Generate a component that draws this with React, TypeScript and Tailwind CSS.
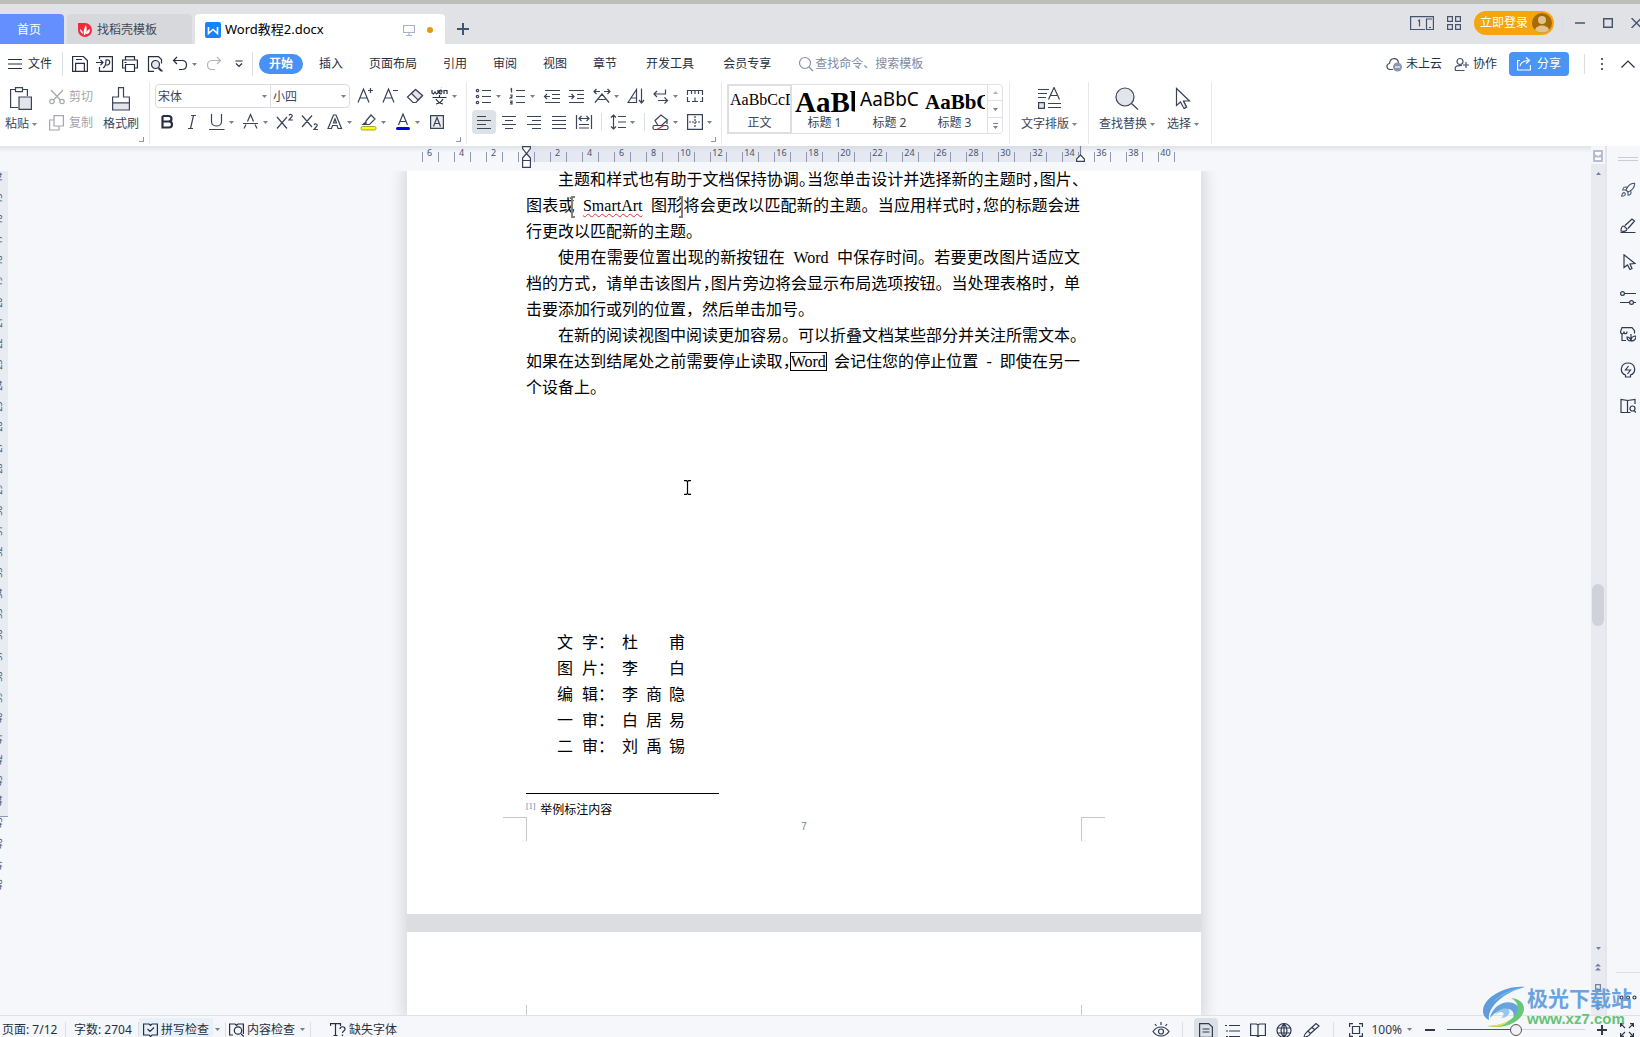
import { ReactNode, useState } from 'react';
import { Rocket } from 'lucide-react';

const menuTabs = ['插入', '页面布局', '引用', '审阅', '视图', '章节'];

const rulerLabels = [
  '6', '4', '2', '', '2', '4', '6', '8', '10', '12', '14', '16', '18', '20', '22', '24',
  '26', '28', '30', '32', '34', '36', '38', '40',
];

const credits = [
  ['文', '字：', '杜', '', '甫'],
  ['图', '片：', '李', '', '白'],
  ['编', '辑：', '李', '商', '隐'],
  ['一', '审：', '白', '居', '易'],
  ['二', '审：', '刘', '禹', '锡'],
];

const range = (from: number, to: number) => Array.from({ length: to - from + 1 }, (_, i) => from + i);

type IconProps = { w?: number; h?: number; className?: string; children: ReactNode };

function Icon({ w = 18, h = 18, className = '', children }: IconProps) {
  return (
    <svg
      width={w}
      height={h}
      viewBox={`0 0 ${w} ${h}`}
      fill="none"
      stroke="currentColor"
      strokeWidth={1.2}
      className={`shrink-0 ${className}`}
      aria-hidden="true"
    >
      {children}
    </svg>
  );
}

function Caret({ className = '' }: { className?: string }) {
  return (
    <svg width="5" height="3" viewBox="0 0 5 3" className={`shrink-0 ${className}`} aria-hidden="true">
      <path d="M0 0h5L2.5 3z" fill="#74809c" />
    </svg>
  );
}

type ToolProps = { label: string; caret?: boolean; active?: boolean; children: ReactNode };

function Tool({ label, caret, active, children }: ToolProps) {
  return (
    <button type="button" title={label} aria-label={label} className="flex h-6 shrink-0 items-center">
      <span className={`flex h-6 w-6 items-center justify-center rounded-sm ${active ? 'bg-[#dde2e7]' : ''}`}>
        {children}
      </span>
      {caret && (
        <span className="flex w-[9px] justify-start">
          <Caret />
        </span>
      )}
    </button>
  );
}

function GroupCorner() {
  return <span className="absolute right-[5px] bottom-0.5 h-[5px] w-[5px] border-r border-b border-[#8b95ab]" />;
}

function Divider({ className = '' }: { className?: string }) {
  return <span className={`w-px shrink-0 bg-[#dcdee4] ${className}`} />;
}

function TitleBar() {
  return (
    <header className="flex h-11 shrink-0 items-stretch overflow-hidden border-t-4 border-[#bdbdba] bg-[#e1e2e6]">
      <nav className="flex items-end gap-[3px]">
        <button type="button" className="h-[30px] w-16 rounded-tr-sm bg-[#648fff] pt-0.5 pr-1.5 text-white">
          首页
        </button>
        <button type="button" className="flex h-[30px] w-[125px] items-center gap-1 rounded-t-sm bg-[#d7d8db] pt-0.5 pl-[10px] text-[#3f4757]">
          <Icon w={16} h={16}>
            <path d="M1 1h7a7 7 0 1 1-7 7z" fill="#f8283c" stroke="none" />
            <path d="M7 13c-1-3 0-7 2-10 1 3 1 7-1 10zM9 12c0-2 1-4 4-5 0 3-1 5-4 5zM6 12c-2-1-3-3-3-5 2 1 3 3 3 5z" fill="#fff" stroke="none" />
          </Icon>
          找稻壳模板
        </button>
        <div className="flex h-[30px] w-[250px] items-center rounded-t-sm bg-white pt-0.5 pr-3 pl-[10px] text-black">
          <Icon w={16} h={16}>
            <rect width="16" height="16" rx="2" fill="#1683fb" stroke="none" />
            <path d="M3.500 5v6.500L8 7.500l4.500 4V5" stroke="#fff" strokeWidth="1.6" />
          </Icon>
          <span className="ml-1 text-[13px]">Word教程2.docx</span>
          <Icon w={12} h={12} className="ml-auto text-[#aab3c5]">
            <path d="M.5 1.500h11v7H.5zM6 8.500v3M3 11.500h6" />
          </Icon>
          <span className="ml-3 h-1.5 w-1.5 rounded-full bg-[#e8960c]" />
        </div>
      </nav>
      <button type="button" aria-label="新建标签" className="mt-[10px] ml-3 flex w-3 items-center text-[#46536f]">
        <Icon w={12} h={12}>
          <path d="M6 0v12M0 6h12" strokeWidth="2" />
        </Icon>
      </button>

      <div className="mb-0.5 ml-auto flex shrink-0 items-center text-[#46536f]">
        <button type="button" aria-label="窗口布局">
          <Icon w={24} h={14}>
            <path d="M15 13.500H.6V.6h22.800v12.900H16.500V3H22M9.500 10.500V4L8 5M19 11.500h2" />
          </Icon>
        </button>
        <button type="button" aria-label="应用" className="ml-[13px]">
          <Icon w={14} h={14}>
            <path d="M.6.600h4.800v4.800H.6zM8.600.600h4.800v4.800H8.600zM.6 8.600h4.800v4.800H.6zM8.600 8.600h4.800v4.800H8.600z" />
          </Icon>
        </button>
        <button type="button" className="ml-[13px] flex h-6 w-20 items-center gap-1 rounded-full bg-[#f5a60d] pl-1.5 text-white">
          <span className="whitespace-nowrap">立即登录</span>
          <Icon w={20} h={20}>
            <circle cx="10" cy="10" r="10" fill="#a36a05" stroke="none" />
            <circle cx="10" cy="7" r="4" fill="#e0c48f" stroke="none" />
            <path d="M3 17c1-6 13-6 14 0a10 10 0 0 1-14 0z" fill="#e0c48f" stroke="none" />
          </Icon>
        </button>
        <Divider className="ml-2 h-5 bg-[#c3c6ce]" />
        <button type="button" aria-label="最小化" className="ml-3">
          <Icon w={10} h={12}>
            <path d="M0 6h10" strokeWidth="1.500" />
          </Icon>
        </button>
        <button type="button" aria-label="最大化" className="ml-[18px]">
          <Icon w={10} h={10}>
            <path d="M.7.700h8.600v8.600H.7z" strokeWidth="1.400" />
          </Icon>
        </button>
        <button type="button" aria-label="关闭" className="-mr-0.5 ml-[18px]">
          <Icon w={11} h={10}>
            <path d="m.5 0 10 10M10.500 0l-10 10" strokeWidth="1.400" />
          </Icon>
        </button>
      </div>
    </header>
  );
}

function MenuBar() {
  return (
    <div className="flex h-[38px] shrink-0 items-center overflow-hidden bg-white pt-0.5 whitespace-nowrap text-[#262f42]">
      <button type="button" className="ml-2 flex items-center gap-1.5">
        <Icon w={14} h={12}>
          <path d="M0 1.500h14M0 6h14M0 10.500h14" />
        </Icon>
        文件
      </button>
      <Divider className="ml-[10px] h-6" />
      <div className="ml-[5px] flex items-center gap-px">
        <Tool label="保存">
          <Icon>
            <path d="M1.600 4.500v-3h10.800l4 4v10.900H4.500M1.600 4.500v11.900h3v-8h8.800v8M5 4.500h6" />
          </Icon>
        </Tool>
        <Tool label="输出为PDF">
          <Icon>
            <path d="M3.500 4V1.600h12.900v14.800H3.500V12M0 7.500h7M4.500 5 7 7.500 4.500 10M7 13c2-1 3-4 3-8 5-1 5 5 0 5" />
          </Icon>
        </Tool>
        <Tool label="打印">
          <Icon>
            <path d="M4.500 5V1.600h9V5M4.500 13H1.600V5h14.800v8h-2.900M4.500 9.500h9v7h-9zM3.500 7.500h2" />
          </Icon>
        </Tool>
        <Tool label="打印预览">
          <Icon>
            <path d="M8 16.400H2.500V1.600h10l3 3v4M15 16l-2.500-2.500" />
            <circle cx="9.500" cy="9.500" r="4" fill="#e3e5ea" />
            <path d="m12.500 12.500 4 4" />
          </Icon>
        </Tool>
        <Tool label="撤销" caret>
          <Icon>
            <path d="M6 2 2.500 5.500 6 9M2.500 5.500H11c6 0 6 9 0 9H8" />
          </Icon>
        </Tool>
        <Tool label="恢复">
          <Icon className="text-[#b1b4bb]">
            <path d="m12 2 3.500 3.500L12 9M15.500 5.500H7c-6 0-6 9 0 9h3" />
          </Icon>
        </Tool>
        <Tool label="自定义快速访问工具栏">
          <Icon w={8} h={8}>
            <path d="M.5 1h7M1 3.500 4 6.500l3-3" />
          </Icon>
        </Tool>
      </div>
      <Divider className="ml-px h-6" />
      <button type="button" className="mr-[3px] ml-1.5 h-5 w-11 rounded-full bg-[#4a91f5] font-bold text-white">
        开始
      </button>
      {menuTabs.map(tab => (
        <button type="button" key={tab} className="px-[13px]">
          {tab}
        </button>
      ))}
      <button type="button" className="px-4">开发工具</button>
      <button type="button" className="px-[13px]">会员专享</button>
      <label className="ml-[14px] flex items-center gap-px text-[#8590a6]">
        <Icon w={16} h={16}>
          <circle cx="7" cy="7" r="5.500" />
          <path d="m11 11 4 4" />
        </Icon>
        <input type="text" aria-label="搜索" placeholder="查找命令、搜索模板" className="w-[130px] placeholder-[#7f8aa2] outline-none" />
      </label>

      <div className="ml-auto flex shrink-0 items-center">
        <button type="button" className="flex items-center gap-1">
          <Icon w={16} h={16} className="text-[#46536f]">
            <path d="M7 13.500H4C0 13 0 8 3.500 7.500 4 1 12 1 12.500 7" />
            <circle cx="11.500" cy="11" r="4.500" fill="#8d97ab" stroke="none" />
            <path d="M9 11h5" stroke="#fff" />
          </Icon>
          未上云
        </button>
        <button type="button" className="ml-3 flex items-center gap-1">
          <Icon w={15} h={15} className="text-[#46536f]">
            <circle cx="6" cy="4.500" r="3" />
            <path d="M10.500 13.500H1.500C0 8 4 9 8 8.500M12 5v6M9 8h6" />
          </Icon>
          协作
        </button>
        <button type="button" className="ml-3 flex h-6 w-[60px] items-center gap-1.5 rounded bg-[#4a93f7] pl-2 text-white">
          <Icon w={14} h={14}>
            <path d="M3 3.500H.6V13h12.800V8M3 9c1-4 4-5.500 9-5.500M9 .5l3.500 3L9 6.500" />
          </Icon>
          分享
        </button>
        <Divider className="ml-[15px] h-5" />
        <button type="button" aria-label="更多" className="ml-4">
          <svg width="2" height="12" viewBox="0 0 2 12" fill="#5a6478">
            <path d="M0 0h2v2H0zM0 5h2v2H0zM0 10h2v2H0z" />
          </svg>
        </button>
        <button type="button" aria-label="收起功能区" className="mr-[5px] ml-[18px]">
          <Icon w={14} h={8}>
            <path d="m.5 7.500 6.500-6.500 6.500 6.500" />
          </Icon>
        </button>
      </div>
    </div>
  );
}

function ClipboardGroup() {
  return (
    <div className="relative flex w-[150px] shrink-0 border-r border-[#e6e8ec]">
      <button type="button" className="flex w-[42px] flex-col items-center gap-1 pt-[5px]">
        <Icon w={22} h={24}>
          <path d="M8 20.500H.6V2.500H5M13 2.500h4.400V9M5.500.600h7v4h-7z" />
          <path d="M9 10h12.400v12.400H9z" fill="#e3e5ea" />
        </Icon>
        <span className="flex items-center gap-[3px] leading-[18px]">
          粘贴
          <Caret />
        </span>
      </button>
      <div className="ml-[7px] flex flex-col gap-0.5 pt-[3px] text-[#a3a6ad]">
        <button type="button" className="flex h-6 items-center gap-1">
          <Icon w={16} h={16}>
            <path d="m2 1 9.500 10M14 1 4.500 11" />
            <circle cx="3" cy="12.500" r="2.200" />
            <circle cx="13" cy="12.500" r="2.200" />
          </Icon>
          剪切
        </button>
        <button type="button" className="flex h-6 items-center gap-1">
          <Icon w={16} h={16}>
            <path d="M5 .6h9.400V11H5zM5 5H.6v10H10v-4" />
          </Icon>
          复制
        </button>
      </div>
      <button type="button" className="ml-[10px] flex w-9 flex-col items-center gap-1 pt-[5px]">
        <Icon w={18} h={24}>
          <path d="M6.500 10V.6h5V10h5.900v6H.6v-6z" />
          <path d="M.6 16h16.800v7H.6z" fill="#e3e5ea" />
        </Icon>
        <span className="leading-[18px]">格式刷</span>
      </button>
      <GroupCorner />
    </div>
  );
}

function FontGroup() {
  return (
    <div className="relative flex w-[317px] shrink-0 flex-col gap-0.5 border-r border-[#e6e8ec] pt-0.5 pl-[5px]">
      <div className="flex items-center gap-px">
        <div className="mr-0.5 flex h-6 w-[195px] items-center rounded-sm border border-[#d9dbe0]">
          <select aria-label="字体" className="w-[106px] appearance-none pt-0.5 pl-0.5 outline-none">
            <option>宋体</option>
          </select>
          <Caret />
          <Divider className="ml-[3px] h-[22px]" />
          <select aria-label="字号" className="w-[70px] appearance-none pt-0.5 pl-0.5 outline-none">
            <option>小四</option>
          </select>
          <Caret />
        </div>
        <Tool label="增大字号">
          <Icon>
            <path d="M2 15.500 7.500 2 13 15.500M4 11h7M12 3.500h5M14.500 1v5" />
          </Icon>
        </Tool>
        <Tool label="减小字号">
          <Icon>
            <path d="M2 15.500 7.500 2 13 15.500M4 11h7M12 3.500h5" />
          </Icon>
        </Tool>
        <Tool label="清除格式">
          <Icon>
            <path d="m1.500 10 8-7.500 7 6-6.500 7H7z" />
            <path d="m5.500 6.500 6.500 6.500 4.500-4.500-7-6z" fill="#e3e5ea" />
          </Icon>
        </Tool>
        <Tool label="拼音指南" caret>
          <Icon className="text-[#262f42]">
            <path d="M1 3v3l1.500 1L4 5l1.500 2L7 6V3M8 5h3c0-3-3-2-3 0s1.500 2 3 1.500M13 7V3.500h3V7M10 0l1-1M1.500 10.500h14M8.500 8v2.500M5 12c1 2 3 4 7 5M12 12c-1 2-3 4-7 5" />
          </Icon>
        </Tool>
      </div>
      <div className="flex items-center gap-px">
        <Tool label="加粗">
          <Icon className="text-[#262f42]">
            <path d="M4.500 3h6c4 0 4 5.500 0 5.500h-6M4.500 8.500h6.500c4 0 4 6 0 6H4.500zM4.500 3v11" strokeWidth="2.200" />
          </Icon>
        </Tool>
        <Tool label="倾斜">
          <Icon>
            <path d="M8 2.500h5M5 15.500h5M10.500 2.500l-3 13" />
          </Icon>
        </Tool>
        <Tool label="下划线" caret>
          <Icon>
            <path d="M3.500 1v7.500c0 6 10 6 10 0V1M1 16.500h15.500" />
          </Icon>
        </Tool>
        <Tool label="删除线" caret>
          <Icon>
            <path d="m5.500 8.500 3-7 3 7M4 11.500l-2 4M13 11.500l2 4M1 10.500h15" />
          </Icon>
        </Tool>
        <Tool label="上标">
          <Icon>
            <path d="m1 4 10 11.500M11 4 1 15.500M13 2.500c1-2 4-1 3 1L13 7h4" />
          </Icon>
        </Tool>
        <Tool label="下标">
          <Icon>
            <path d="m1 2.500 10 11.500M11 2.500 1 14M13 12c1-2 4-1 3 1l-3 3.500h4" />
          </Icon>
        </Tool>
        <Tool label="文字效果" caret>
          <Icon>
            <path d="M2 15.500 7.500 2H10l5.500 13.500H12l-1-3H6.500l-1 3zM7.500 10h3L9 6z" />
          </Icon>
        </Tool>
        <Tool label="突出显示" caret>
          <Icon>
            <path d="m6 8 5-6 4 4-5.500 5.500H6zM6 9l-3 2.500h5" />
            <rect x="1" y="13.500" width="15" height="3.500" rx="1.500" fill="#ff0" stroke="#8a8a3c" strokeWidth=".8" />
          </Icon>
        </Tool>
        <Tool label="字体颜色" caret>
          <Icon>
            <path d="m4.500 12 4.500-11 4.500 11M6 8.500h6" />
            <rect x="2" y="14" width="14" height="3" rx="1.500" fill="#00f" stroke="none" />
          </Icon>
        </Tool>
        <Tool label="字符底纹">
          <Icon>
            <path d="M2.600 2.600h12.800v12.800H2.600z" fill="#e9ebef" />
            <path d="M5.500 13.500 9 4.500l3.500 9M7 10.500h4" />
          </Icon>
        </Tool>
      </div>
      <GroupCorner />
    </div>
  );
}

function ParagraphGroup() {
  return (
    <div className="relative flex w-[255px] shrink-0 flex-col gap-0.5 border-r border-[#e6e8ec] pt-0.5 pl-[5px]">
      <div className="flex items-center gap-px">
        <Tool label="项目符号" caret>
          <Icon>
            <path d="M7 3.500h9M7 9.500h9M7 15.500h9" />
            <circle cx="2.500" cy="3.500" r="1.200" />
            <circle cx="2.500" cy="9.500" r="1.200" />
            <circle cx="2.500" cy="15.500" r="1.200" />
          </Icon>
        </Tool>
        <Tool label="编号" caret>
          <Icon>
            <path d="M7 3.500h9M7 9.500h9M7 15.500h9M1.500 2.500l1-.8V5.500M1 8h2v1.500L1 11h2.500M1 14h2v3H1M1 15.500h2" />
          </Icon>
        </Tool>
        <Tool label="减少缩进">
          <Icon>
            <path d="M2 3.500h15M9 7.500h8M9 11.500h8M2 15.500h15M1.500 9.500H7M4 7 1.500 9.500 4 12" />
          </Icon>
        </Tool>
        <Tool label="增加缩进">
          <Icon>
            <path d="M1 3.500h15M9 7.500h7M9 11.500h7M1 15.500h15M.5 9.500H6M3.500 7 6 9.500 3.500 12" />
          </Icon>
        </Tool>
        <Tool label="中文版式" caret>
          <Icon>
            <path d="M1 4.500h6M3.500 2 1 4.500 3.500 7M11 4.500h6M14.500 2 17 4.500 14.500 7M2 15.500 9 7l7 8.500M5.500 12.500h7" />
          </Icon>
        </Tool>
        <Tool label="排序">
          <Icon>
            <path d="M1 15.500 9.500 2.500v13zM4 11h5.500M14.500 1.500v14M12 13l2.500 3L17 13" />
          </Icon>
        </Tool>
        <Tool label="换行" caret>
          <Icon>
            <path d="M13.500 2.500V7H2M5 4 2 7l3 3M6 13.500h9M12.500 10.500l3 3-3 3" />
          </Icon>
        </Tool>
        <Tool label="制表位">
          <Icon>
            <path d="M1.500 8V3.500h15V8M5.500 3.500V7M9 3.500V7M12.500 3.500V7M1.500 10v4.500H4M16.500 10v4.500H14M6 14.500h6M9 10.500v4" />
          </Icon>
        </Tool>
      </div>
      <div className="flex items-center gap-px">
        <Tool label="左对齐" active>
          <Icon>
            <path d="M2 3.500h9M2 7.500h14M2 11.500h9M2 15.500h14" />
          </Icon>
        </Tool>
        <Tool label="居中对齐">
          <Icon>
            <path d="M2 3.500h14M5 7.500h8M2 11.500h14M5 15.500h8" />
          </Icon>
        </Tool>
        <Tool label="右对齐">
          <Icon>
            <path d="M2 3.500h14M7 7.500h9M2 11.500h14M7 15.500h9" />
          </Icon>
        </Tool>
        <Tool label="两端对齐">
          <Icon>
            <path d="M2 3.500h14M2 7.500h14M2 11.500h14M2 15.500h14" />
          </Icon>
        </Tool>
        <Tool label="分散对齐">
          <Icon>
            <path d="M1.500 2v14M16.500 2v14M4 5.500h10M6.500 3 4 5.500 6.500 8M11.500 3 14 5.500 11.500 8M4 11.500h10M4 15h10" />
          </Icon>
        </Tool>
        <span className="flex w-2 justify-center">
          <Divider className="h-[18px]" />
        </span>
        <Tool label="行距" caret>
          <Icon>
            <path d="M4.500 2v14M2 4.500 4.500 2 7 4.500M2 13.500 4.500 16 7 13.500M9 3.500h8M9 9h8M9 14.500h8" />
          </Icon>
        </Tool>
        <span className="flex w-2 justify-center">
          <Divider className="h-[18px]" />
        </span>
        <Tool label="底纹颜色" caret>
          <Icon>
            <path d="m3 7.500 6-5.500 6.500 5-6 5.500H6zM15 8v3" />
            <rect x="1" y="12.500" width="15" height="4" rx="1.500" fill="#fff" />
            <path d="m5 16.500 7-4" stroke="#e0312f" />
          </Icon>
        </Tool>
        <Tool label="边框" caret>
          <Icon>
            <path d="M1.600 1.600h14.800v14.800H1.600z" />
            <path d="M9 3v12M3 9h12" strokeDasharray="2 1" />
          </Icon>
        </Tool>
      </div>
      <GroupCorner />
    </div>
  );
}

function StyleCard({ name, sample, active }: { name: string; sample: ReactNode; active?: boolean }) {
  return (
    <button
      type="button"
      className={`flex h-[50px] w-[65px] shrink-0 flex-col justify-end border-2 ${active ? 'border-[#dcdee4]' : 'border-transparent'}`}
    >
      <span className="flex h-7 items-center overflow-hidden px-px text-left whitespace-nowrap text-black">{sample}</span>
      <span className="w-full text-center leading-[18px]">{name}</span>
    </button>
  );
}

function StylesGroup() {
  return (
    <div className="flex w-[288px] shrink-0 border-r border-[#e6e8ec] pt-0.5 pl-[5px]">
      <div className="flex h-[50px] w-[276px] rounded-sm bg-white outline-1 -outline-offset-1 outline-[#dfe1e6]">
        <StyleCard name="正文" active sample={<span className="font-['Liberation_Serif',serif] text-base">AaBbCcD</span>} />
        <StyleCard name="标题 1" sample={<span className="pt-1 font-['Liberation_Serif',serif] text-[29px] font-bold">AaBb</span>} />
        <StyleCard name="标题 2" sample={<span className="font-['Noto_Sans',sans-serif] text-[19px]">AaBbC</span>} />
        <StyleCard name="标题 3" sample={<span className="pt-1 font-['Liberation_Serif',serif] text-[21px] font-bold">AaBbC</span>} />
        <div className="flex flex-1 flex-col divide-y divide-[#dfe1e6] border-l border-[#dfe1e6]">
          <button type="button" aria-label="上一行样式" className="flex flex-1 items-center justify-center">
            <Caret className="rotate-180 opacity-60" />
          </button>
          <button type="button" aria-label="下一行样式" className="flex flex-1 items-center justify-center">
            <Caret />
          </button>
          <button type="button" aria-label="更多样式" className="flex flex-1 flex-col items-center justify-center gap-0.5">
            <span className="h-px w-[5px] bg-[#74809c]" />
            <Caret />
          </button>
        </div>
      </div>
    </div>
  );
}

function BigTool({ label, children }: { label: string; children: ReactNode }) {
  return (
    <button type="button" className="flex flex-col items-center gap-1 pt-[5px]">
      {children}
      <span className="flex items-center gap-[3px] leading-[18px]">
        {label}
        <Caret />
      </span>
    </button>
  );
}

function Toolbar() {
  return (
    <div className="relative z-10 flex h-16 shrink-0 overflow-hidden bg-white pb-0.5 whitespace-nowrap text-[#3a4459]">
      <ClipboardGroup />
      <FontGroup />
      <ParagraphGroup />
      <StylesGroup />
      <div className="flex w-[79px] shrink-0 justify-center border-r border-[#e6e8ec]">
        <BigTool label="文字排版">
          <Icon w={24} h={24}>
            <path d="M1 2.500h11M1 6.500h9M1 10.500h8M11.500 12.500l5.500-12 5.500 12M13.500 8.500h7M11 16.500h13M11 20.500h13" />
            <path d="M1.600 15.600h5.800v5.800H1.600z" fill="#e3e5ea" />
          </Icon>
        </BigTool>
      </div>
      <div className="flex w-[123px] shrink-0 gap-3 border-r border-[#e6e8ec] pl-[10px]">
        <BigTool label="查找替换">
          <Icon w={24} h={24}>
            <circle cx="10" cy="10" r="9" fill="#e3e5ea" />
            <path d="m16.500 16.500 6.500 6" />
          </Icon>
        </BigTool>
        <BigTool label="选择">
          <Icon w={16} h={24}>
            <path d="M1.500 1.500v17l4-3.500 3.500 6.500 2.500-1.500-3-6h6z" />
            <path d="m8.500 14 3 6-2.500 1.500" fill="#e3e5ea" />
          </Icon>
        </BigTool>
      </div>
    </div>
  );
}

function Ruler() {
  return (
    <div className="flex h-[25px] shrink-0 justify-center bg-linear-to-b from-[#dfe2e6] to-[#f5f7fa] to-25% pl-[17px]">
      <div className="relative w-[794px] shrink-0 pt-1.5 pl-[15px]">
        <span className="absolute top-0 left-[119px] h-4 w-[554px] bg-[#d5dae6]/50" />
        <div className="relative flex">
          {rulerLabels.map((label, i) => (
            <div key={i} className="flex h-[10px] w-8 shrink-0 border-l border-[#8f99b3]">
              <span className="-mt-[5px] mr-0.5 w-[13px] text-center text-[9px] leading-3 text-[#46536f]">{label}</span>
              <span className="h-[10px] w-px bg-[#8f99b3]" />
            </div>
          ))}
        </div>
        <Icon w={9} h={22} className="absolute top-0 left-[115px] text-[#3a4459]">
          <path d="M.6.600h7.800v2L4.500 7.500.6 2.600zM4.500 7.500 8.400 12v2.500H.6V12zM.6 14.500h7.800v6.900H.6z" fill="#fff" />
        </Icon>
        <Icon w={9} h={16} className="absolute top-0 left-[669px] text-[#3a4459]">
          <path d="M4.500 0v9" stroke="#74809c" />
          <path d="M4.500 9 8.400 13v2.400H.6V13z" fill="#fff" />
        </Icon>
      </div>
    </div>
  );
}

function VerticalRuler() {
  const mark = 'flex flex-1 items-center justify-center rotate-180 [writing-mode:vertical-rl]';
  return (
    <div className="w-2 shrink-0 overflow-hidden text-[9px] leading-[9px] text-[#46536f]">
      <ol className="-mt-1 flex h-[650px] flex-col border-b border-[#8f99b3] bg-[#e8ebf1] pb-[5px]">
        {range(14, 44).map(n => (
          <li key={n} className={mark}>
            <span className="ml-[11px]">{n}</span>
          </li>
        ))}
      </ol>
      <ol className="-mt-[5px] flex h-[83px] flex-col">
        {range(45, 48).map(n => (
          <li key={n} className={mark}>
            <span className="ml-[11px]">{n}</span>
          </li>
        ))}
      </ol>
    </div>
  );
}

function Half({ children }: { children: ReactNode }) {
  return <span className="[font-feature-settings:'halt']">{children}</span>;
}

function Line({ indent, last, children }: { indent?: boolean; last?: boolean; children: ReactNode }) {
  return (
    <span className={`block ${indent ? 'pl-8' : ''} ${last ? '' : '[text-align-last:justify]'}`}>{children}</span>
  );
}

function DocumentPages() {
  return (
    <main className="flex min-w-0 flex-1 justify-center overflow-hidden pl-[9px]">
      <div className="flex w-[794px] shrink-0 flex-col gap-[18px] bg-[#dcdde0] font-['Liberation_Serif','Noto_Sans_CJK_SC',serif] text-base leading-[26px] text-black shadow-[0_0_14px_4px_rgba(0,0,0,0.13)]">
        <article className="relative flex h-[743px] shrink-0 flex-col bg-white">
          <div className="mx-auto -mt-1 w-[556px] pr-0.5 whitespace-nowrap">
            <p>
              <Line indent>
                主题和样式也有助于文档保持协调<Half>。</Half>当您单击设计并选择新的主题时<Half>，</Half>图片<Half>、</Half>
              </Line>
              <Line>
                图表或
                <span className="-ml-1 inline-block h-[22px] w-1 border-y-2 border-l-2 border-[#808080] align-middle" />&nbsp;{' '}
                <span className="underline decoration-[#e0312f] decoration-wavy decoration-1 underline-offset-2">SmartArt</span>&nbsp;{' '}
                图形
                <span className="-ml-1 inline-block h-[22px] w-1 border-y-2 border-r-2 border-[#808080] align-middle" />
                将会更改以匹配新的主题。当应用样式时<Half>，</Half>您的标题会进
              </Line>
              <Line last>行更改以匹配新的主题。</Line>
            </p>
            <p>
              <Line indent>
                使用在需要位置出现的新按钮在&nbsp; Word&nbsp; 中保存时间。若要更改图片适应文
              </Line>
              <Line>
                档的方式，请单击该图片<Half>，</Half>图片旁边将会显示布局选项按钮。当处理表格时，单
              </Line>
              <Line last>击要添加行或列的位置，然后单击加号。</Line>
            </p>
            <p>
              <Line indent>在新的阅读视图中阅读更加容易。可以折叠文档某些部分并关注所需文本。</Line>
              <Line>
                如果在达到结尾处之前需要停止读取<Half>，</Half>
                <span className="outline-1 outline-black">Word</span>&nbsp; 会记住您的停止位置&nbsp; -&nbsp; 即使在另一
              </Line>
              <Line last>个设备上。</Line>
            </p>
          </div>

          <div className="mt-[229px] ml-[150px]">
            {credits.map(row => (
              <div key={row[0]} className="grid grid-cols-[25px_40px_24px_23px_16px]">
                {row.map((cell, i) => (
                  <span key={i}>{cell}</span>
                ))}
              </div>
            ))}
          </div>

          <hr className="mt-[33px] ml-[119px] w-[193px] border-black" />
          <p className="ml-[119px] flex h-[23px] gap-[5px] pt-[7px] text-xs leading-[18px]">
            <a href="#footnote" className="text-[8px] leading-[12px] text-[#4a7fb5]">[1]</a>
            举例标注内容
          </p>
          <footer className="flex justify-between px-24">
            <span className="h-6 w-6 border-t border-r border-[#c8c8c8]" />
            <span className="font-['Liberation_Sans',sans-serif] text-[10px] leading-5 text-[#808080]">7</span>
            <span className="h-6 w-6 border-t border-l border-[#c8c8c8]" />
          </footer>

          {/* text cursor */}
          <Icon w={7} h={15} className="absolute top-[309px] left-[277px]">
            <path d="M0 .6h2.500l1 1 1-1H7M0 14.400h2.500l1-1 1 1H7M3.500 1.500v12" />
          </Icon>
        </article>
        <article className="flex h-[120px] shrink-0 items-start justify-between bg-white px-24 pt-[73px]">
          <span className="h-6 w-6 border-r border-b border-[#c8c8c8]" />
          <span className="h-6 w-6 border-b border-l border-[#c8c8c8]" />
        </article>
      </div>
    </main>
  );
}

function ScrollBar() {
  return (
    <div className="flex w-4 shrink-0 flex-col items-center border-r-2 border-[#e3e5eb] bg-[#f5f7fa]">
      <button type="button" aria-label="标尺" className="mt-1 mb-0.5">
        <Icon w={10} h={12}>
          <rect width="10" height="12" rx="1" fill="#b4bdd2" stroke="none" />
          <path d="M2 2h6v2L5 6 2 4zM2 7.500h6V10H2z" fill="#fff" stroke="none" />
        </Icon>
      </button>
      <div className="flex w-full flex-1 flex-col items-center bg-[#e8eaf0] pt-2 pb-1">
        <Caret className="rotate-180" />
        <span className="mt-[409px] h-[42px] w-3 rounded-full bg-[#cfd2db]" />
        <div className="mt-auto flex flex-col items-center gap-[13px]">
          <Caret />
          <Icon w={6} h={8}>
            <path d="M0 3.500 3 .5l3 3zM0 7.500l3-3 3 3z" fill="#74809c" stroke="none" />
          </Icon>
          <Icon w={6} h={6} className="text-[#74809c]">
            <path d="M.6.600h4.800v4.800H.6z" />
          </Icon>
          <Icon w={6} h={8}>
            <path d="m0 .5 3 3 3-3zM0 4.500l3 3 3-3z" fill="#74809c" stroke="none" />
          </Icon>
        </div>
      </div>
    </div>
  );
}

function SidePanel() {
  return (
    <aside className="flex w-[33px] shrink-0 flex-col items-center overflow-hidden bg-[#f5f7fa] pl-[9px] text-[#2f3950]">
      <span className="mt-[11px] h-1 w-5 shrink-0 border-y border-[#c9ccd2]" />
      <div className="mt-[21px] flex flex-col gap-5">
        <Rocket size={16} strokeWidth={1.6} className="text-[#46536f]" />
        <Icon w={16} h={16}>
          <path d="M.5 14.500h15M1 13c0-3 1-5 3-5l3 3c0 2-3 3-6 2zM5 7.500 12 1l2.500 2L8 10.500" />
        </Icon>
        <Icon w={16} h={16}>
          <path d="M4 .8v12.700l3.500-2.500L10 15.500l2-1-2-4.500 5-.5z" />
        </Icon>
        <Icon w={16} h={16}>
          <path d="M4.500 3.500H16M0 12.500h9M13.500 12.500H16" />
          <circle cx="2.500" cy="3.500" r="1.900" />
          <circle cx="11.500" cy="12.500" r="1.900" />
        </Icon>
        <Icon w={16} h={16}>
          <path d="M2 8v6.500h4M.6 5.500 2 1.600h10l2.500 3v3M.6 5.500c0 3 3.400 3 3.400 0 0 3 3 3 3 0" />
          <path d="M11 15V8M11 15c-2 0-4-1-4-4 2 0 4 2 4 4zM11 15c2 0 5-1 5-5-3 0-5 2-5 5z" />
        </Icon>
        <Icon w={16} h={16}>
          <path d="M5.500 13v2h5v-2C17 10.500 15.500 1 8 1S-1 10.500 5.500 13zM8.500 4 5.500 8h5L7.500 12" />
        </Icon>
        <Icon w={16} h={16}>
          <path d="M7.500 14.500H1V1.500l6.500 1zM7.500 2.500l7.500-1V6M7.500 14.500h3" />
          <circle cx="12.500" cy="10.500" r="2.500" />
          <path d="m14 12.500 2 2" />
        </Icon>
      </div>
      <div className="mt-auto flex h-[43px] w-full justify-center border-t border-[#dcdee4] pt-[22px]">
        <Icon w={18} h={5}>
          <circle cx="2.500" cy="2.500" r="1.500" />
          <circle cx="9" cy="2.500" r="1.500" />
          <circle cx="15.500" cy="2.500" r="1.500" />
        </Icon>
      </div>
    </aside>
  );
}

function StatusBar() {
  const [zoom, setZoom] = useState(50);

  return (
    <footer className="h-[22px] shrink-0 overflow-hidden border-t border-[#dfe1e7] bg-[#f5f7fa] whitespace-nowrap text-[#262f42]">
      <div className="flex h-[27px] items-center">
        <button type="button" className="w-[65px] pl-0.5 text-left">页面: 7/12</button>
        <Divider className="h-4" />
        <button type="button" className="w-[72px] pl-2 text-left">字数: 2704</button>
        <Divider className="h-4" />
        <button type="button" className="flex h-6 items-center gap-[3px] bg-[#e8f0fa] px-1">
          <Icon w={15} h={15}>
            <path d="M6 2 7.500 3.500 9 2h5.400v11H9l-1.500 1.500L6 13H.6V2zM4.500 7l2.500 2.500L11 5.500" />
          </Icon>
          拼写检查
        </button>
        <Caret className="mr-[5px] ml-0.5" />
        <Divider className="h-4" />
        <button type="button" className="ml-[3px] flex items-center gap-[3px]">
          <Icon w={15} h={15}>
            <path d="M4 13H.6V2H6l1.500 1.500L9 2h5.400v10M12 12l3 2.500" />
            <circle cx="9" cy="8.500" r="3.700" />
          </Icon>
          内容检查
          <Caret className="ml-0.5" />
        </button>
        <Divider className="ml-[5px] h-4" />
        <button type="button" className="ml-[19px] flex items-center gap-[3px]">
          <Icon w={16} h={15}>
            <path d="M.5 4V1.600h10V4M5.500 1.600v11.900M3.500 13.500h4M10 7c0-3 5-3 5 0 0 2-2.500 2-2.500 4M12.500 12.500V14" />
          </Icon>
          缺失字体
        </button>

        <div className="ml-auto flex shrink-0 items-center text-[#2f3950]">
          <button type="button" aria-label="护眼模式">
            <Icon w={18} h={18}>
              <path d="M1 10.500c4-6 12-6 16 0-4 6-12 6-16 0zM9 1v3M3 3l1.500 2M15 3l-1.500 2" />
              <circle cx="9" cy="10.500" r="2.500" />
            </Icon>
          </button>
          <Divider className="mr-[11px] ml-3 h-4" />
          <button type="button" aria-label="页面视图" className="flex h-6 w-6 items-center justify-center rounded-sm bg-[#dbe0e7]">
            <Icon w={14} h={16}>
              <path d="M.6 1.600h9l3.800 3.500v10.300H.6zM3.500 7h7M3.500 10h7" />
            </Icon>
          </button>
          <button type="button" aria-label="大纲视图" className="ml-[7px]">
            <Icon w={16} h={16}>
              <path d="M4 3.500h11M4 9h11M4 14.500h11M0 3.500h2M1 9h2M1 14.500h2" />
            </Icon>
          </button>
          <button type="button" aria-label="阅读版式" className="ml-[9px]">
            <Icon w={16} h={16}>
              <path d="M8 3 6.500 2H.6v11.500h6L8 15l1.500-1.500h5.900V2h-6zM8 3v11.500" />
            </Icon>
          </button>
          <button type="button" aria-label="Web版式" className="ml-[10px]">
            <Icon w={16} h={16}>
              <circle cx="8" cy="8.500" r="7" />
              <path d="M1 6h14M1 11h14M8 1.500v14M8 1.500c-4 4-4 10 0 14M8 1.500c4 4 4 10 0 14" />
            </Icon>
          </button>
          <button type="button" aria-label="写作模式" className="ml-[11px]">
            <Icon w={17} h={16}>
              <path d="M1 15c0-3 2-4 4-6l2.500 2.500C6 14 4 15 1 15zM5 9l8-7.500 3 2.500-8.500 7.500M9 5.500 12 8" />
            </Icon>
          </button>
          <Divider className="mr-[15px] ml-[13px] h-4" />
          <button type="button" aria-label="最佳显示比例">
            <Icon w={14} h={14}>
              <path d="M.6 4V.600H4M10 .6h3.400V4M.6 10v3.400H4M10 13.400h3.400V10M3.500 3.500h7v7h-7z" />
            </Icon>
          </button>
          <button type="button" className="ml-2 flex items-center gap-[5px]">
            100%
            <Caret />
          </button>
          <button type="button" aria-label="缩小" className="ml-[13px]">
            <Icon w={10} h={10}>
              <path d="M0 5h10" strokeWidth="2" />
            </Icon>
          </button>
          <input
            type="range"
            aria-label="显示比例"
            value={zoom}
            onChange={e => setZoom(Number(e.target.value))}
            className="mx-3 h-px w-[138px] appearance-none bg-linear-to-r from-[#46536f] from-50% to-[#d3d6dc] to-50% [&::-webkit-slider-thumb]:h-3 [&::-webkit-slider-thumb]:w-3 [&::-webkit-slider-thumb]:appearance-none [&::-webkit-slider-thumb]:rounded-full [&::-webkit-slider-thumb]:border [&::-webkit-slider-thumb]:border-[#555] [&::-webkit-slider-thumb]:bg-[#f2f2f2]"
          />
          <button type="button" aria-label="放大">
            <Icon w={10} h={10}>
              <path d="M0 5h10M5 0v10" strokeWidth="2" />
            </Icon>
          </button>
          <button type="button" aria-label="全屏显示" className="mr-[6px] ml-[13px]">
            <Icon w={14} h={14}>
              <path d="M.6 4V.600H4M.6.600 5 5M10 .6h3.400V4M13.400.600 9 5M.6 10v3.400H4M.6 13.400 5 9M10 13.400h3.400V10M13.400 13.400 9 9" />
            </Icon>
          </button>
        </div>
      </div>
    </footer>
  );
}

function Watermark() {
  return (
    <div className="pointer-events-none absolute right-[8px] bottom-2 flex items-center whitespace-nowrap opacity-90">
      <svg width="46" height="44" viewBox="0 0 46 44" aria-hidden="true">
        <path d="M44 2C26 0 2 12 2 26c0 4 2 7 6 9C6 24 20 8 44 2z" fill="#4f93d8" />
        <path d="M44 2C30 4 16 10 10 20c6-8 18-14 34-18z" fill="#63c8f2" />
        <path d="M9 33c2-10 12-18 23-15 10 4 8 15-2 20 4-6 4-13-3-14-7 0-13 3-18 9z" fill="#5a9bdc" />
        <path d="M30 13c18 2 16 18 2 25-7 4-18 5-26 3 14 0 26-5 30-14 2-6 0-11-6-14z" fill="#57c46c" />
        <path d="M6 41c8 0 16-2 22-6-3 6-14 8-22 6z" fill="#e6e04a" />
        <path d="M14 30c3-6 11-8 14-5 2 3-2 8-8 8 4-3 3-6 0-6-2 0-4 1-6 3z" fill="#8cc3ee" />
      </svg>
      <div className="flex flex-col">
        <span className="font-['Noto_Sans_CJK_SC',sans-serif] text-[21px] leading-6 font-bold text-[#5b9bdb]">极光下载站</span>
        <span className="font-['Liberation_Sans',sans-serif] text-[15px] leading-5 font-bold text-[#57bd6a]">www.xz7.com</span>
      </div>
    </div>
  );
}

export default function App() {
  return (
    <div className="relative flex h-screen flex-col overflow-hidden bg-[#f5f7fa] font-['Noto_Sans','Noto_Sans_CJK_SC',sans-serif] text-xs">
      <TitleBar />
      <MenuBar />
      <Toolbar />
      <div className="flex min-h-0 flex-1">
        <div className="flex min-w-0 flex-1 flex-col">
          <Ruler />
          <div className="flex min-h-0 flex-1">
            <VerticalRuler />
            <DocumentPages />
          </div>
        </div>
        <ScrollBar />
        <SidePanel />
      </div>
      <StatusBar />
      <Watermark />
    </div>
  );
}
